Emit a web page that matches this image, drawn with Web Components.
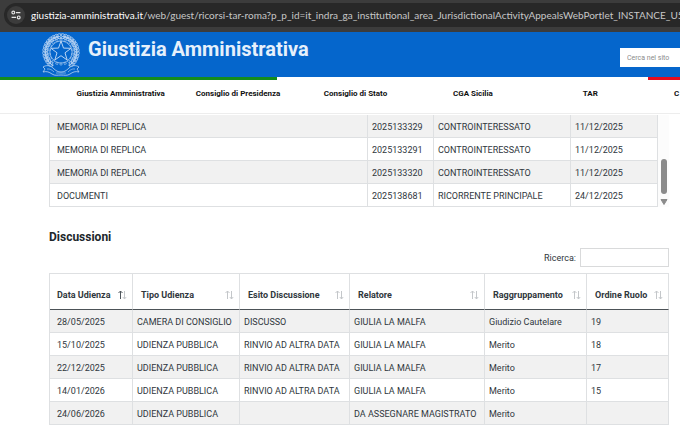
<!DOCTYPE html>
<html lang="it">
<head>
<meta charset="UTF-8">
<meta name="viewport" content="width=device-width, initial-scale=1.0">
<title>Giustizia Amministrativa</title>
<style>
    body {
        margin: 0;
        background: #ffffff;
        color: #30373d;
        font-family: Roboto, "Liberation Sans", sans-serif;
        font-size: 9px;
        overflow-x: hidden;
    }

    main {
        padding: 0 11px 14px 49px;
    }

    h2 {
        margin: 21px 0 0;
        font-size: 12px;
        line-height: 18px;
        font-weight: 700;
        color: #20262b;
    }
</style>
</head>
<body>
    <address-bar host="giustizia-amministrativa.it">/web/guest/ricorsi-tar-roma?p_p_id=it_indra_ga_institutional_area_JurisdictionalActivityAppealsWebPortlet_INSTANCE_U5</address-bar>
    <site-header>Giustizia Amministrativa</site-header>
    <site-nav></site-nav>
    <main>
        <scroll-panel>
            <data-grid id="atti"></data-grid>
        </scroll-panel>
        <h2>Discussioni</h2>
        <table-search>Ricerca:</table-search>
        <data-grid id="discussioni"></data-grid>
    </main>

<script>
    class AddressBar extends HTMLElement {
        constructor() {
            super();
            this.attachShadow({ mode: 'open' });
        }

        connectedCallback() {
            this.shadowRoot.innerHTML = `
                <style>
                    :host {
                        display: block;
                        background: #3c3c3c;
                        padding: 3px 0 5px 4px;
                        overflow: hidden;
                    }
                    .field {
                        display: flex;
                        align-items: center;
                        gap: 6px;
                        height: 24px;
                        padding-left: 3px;
                        border-radius: 12px 0 0 12px;
                        background: #282828;
                        color: #c7c7c7;
                        font-family: Lato, sans-serif;
                        font-size: 10px;
                        white-space: nowrap;
                    }
                    button {
                        flex: none;
                        display: grid;
                        place-items: center;
                        width: 18px;
                        height: 18px;
                        padding: 0;
                        border: 0;
                        border-radius: 50%;
                        background: #3c3c3c;
                    }
                    b {
                        font-weight: 400;
                        color: #ffffff;
                    }
                </style>
                <div class="field">
                    <button aria-label="Informazioni sul sito">
                        <svg width="10" height="10" viewBox="0 0 10 10" fill="none" stroke="#e3e3e3" stroke-width="1.2">
                            <circle cx="2.3" cy="2.6" r="1.4"/>
                            <path d="M5 2.6h4.4M.6 7.4H5"/>
                            <circle cx="7.7" cy="7.4" r="1.4"/>
                        </svg>
                    </button>
                    <span><b>${this.getAttribute('host')}</b><slot></slot></span>
                </div>
            `;
        }
    }

    // Emblema della Repubblica: stella, ruota dentata, rami e nastro
    class RepublicEmblem extends HTMLElement {
        constructor() {
            super();
            this.attachShadow({ mode: 'open' });
        }

        connectedCallback() {
            this.shadowRoot.innerHTML = `
                <style>
                    :host { display: block; }
                    svg { display: block; }
                </style>
                <svg width="40" height="44" viewBox="0 0 40 44" fill="none" stroke="#b9d4f3" stroke-width=".8">
                    ${this.teeth()}
                    <circle cx="20" cy="20" r="11" stroke-width=".6"/>
                    <path d="${this.star(20, 19.5, 10.5, 4.2)}" fill="#0566cc" stroke-width="1"/>
                    ${this.leaves()}
                    <path d="M2 35c3-2 7-2 10 1s5 4 8 4 5-1 8-4 7-3 10-1l-2 2 2 3c-4-1-6 0-9 2s-5 1-9 1-6 1-9-1-5-3-9-2l2-3z"/>
                    <path d="M6 37c3-.5 5 1 7 3M34 37c-3-.5-5 1-7 3M15 41h10" stroke-width=".6"/>
                </svg>
            `;
        }

        star(cx, cy, outer, inner) {
            const points = [];
            for (let i = 0; i < 10; i++) {
                const r = i % 2 ? inner : outer;
                const a = -Math.PI / 2 + i * Math.PI / 5;
                points.push((cx + r * Math.cos(a)).toFixed(1) + ' ' + (cy + r * Math.sin(a)).toFixed(1));
            }
            return 'M' + points.join('L') + 'z';
        }

        teeth() {
            let out = '';
            for (let i = 0; i < 18; i++) {
                out += `<path d="M19 7h2v2h-2z" stroke-width=".5" transform="rotate(${i * 20} 20 20)"/>`;
            }
            return out;
        }

        leaves() {
            let out = '';
            for (let a = 18; a <= 150; a += 11) {
                for (const side of [1, -1]) {
                    out += `<g transform="rotate(${a * side} 20 20)" stroke-width=".7">
                        <path d="M20 4q${-4 * side} -4 ${-6 * side} 0q${3 * side} 2 ${6 * side} 0z"/>
                        <path d="M20 4q${-2 * side} 4 ${-5 * side} 3q${1 * side} -3 ${5 * side} -3z"/>
                    </g>`;
                }
            }
            return out;
        }
    }

    class SiteHeader extends HTMLElement {
        constructor() {
            super();
            this.attachShadow({ mode: 'open' });
        }

        connectedCallback() {
            this.shadowRoot.innerHTML = `
                <style>
                    :host {
                        display: flex;
                        align-items: flex-start;
                        gap: 7px;
                        height: 45px;
                        padding-left: 41px;
                        background: #0566cc;
                    }
                    h1 {
                        flex: 1;
                        margin: 4px 0 0;
                        font-size: 20px;
                        line-height: 26px;
                        font-weight: 700;
                        color: #e6f0fb;
                        white-space: nowrap;
                    }
                    input {
                        box-sizing: border-box;
                        width: 60px;
                        height: 19px;
                        margin-top: 16px;
                        padding: 0 0 0 7px;
                        border: 0;
                        background: #ffffff;
                        font-family: inherit;
                        font-size: 7px;
                    }
                    input::placeholder { color: #8b8b8b; }
                </style>
                <republic-emblem></republic-emblem>
                <h1><slot></slot></h1>
                <input type="text" placeholder="Cerca nel sito" aria-label="Cerca nel sito">
            `;
        }
    }

    class SiteNav extends HTMLElement {
        constructor() {
            super();
            this.attachShadow({ mode: 'open' });
        }

        connectedCallback() {
            const items = ['Giustizia Amministrativa', 'Consiglio di Presidenza', 'Consiglio di Stato', 'CGA Sicilia', 'TAR', 'C'];
            this.shadowRoot.innerHTML = `
                <style>
                    :host {
                        display: block;
                        overflow: hidden;
                        border-bottom: 1px solid #ededed;
                    }
                    .flag {
                        display: grid;
                        grid-template-columns: 277fr 371fr 32fr;
                        height: 3px;
                    }
                    .green { background: #148c1c; }
                    .red { grid-column: 3; background: #e60d1f; }
                    nav {
                        display: grid;
                        grid-auto-flow: column;
                        grid-auto-columns: 19%;
                        margin-left: 62px;
                    }
                    a {
                        font-size: 8px;
                        line-height: 28px;
                        padding-bottom: 5px;
                        font-weight: 700;
                        text-align: center;
                        text-decoration: none;
                        white-space: nowrap;
                        color: #111111;
                    }
                    a:last-child {
                        text-align: left;
                        padding-left: 25px;
                    }
                </style>
                <div class="flag"><div class="green"></div><div class="red"></div></div>
                <nav>${items.map(item => `<a href="#">${item}</a>`).join('')}</nav>
            `;
        }
    }

    class ScrollPanel extends HTMLElement {
        constructor() {
            super();
            this.attachShadow({ mode: 'open' });
        }

        connectedCallback() {
            this.shadowRoot.innerHTML = `
                <style>
                    :host {
                        display: grid;
                        grid-template-columns: 1fr 11px;
                        padding-top: 1px;
                    }
                    .bar {
                        display: flex;
                        flex-direction: column;
                        align-items: center;
                        justify-content: flex-end;
                        gap: 5px;
                        padding-bottom: 2px;
                        background: #fcfcfc;
                    }
                    .thumb {
                        width: 6px;
                        height: 35px;
                        border-radius: 3px;
                        background: #8b8b8b;
                    }
                </style>
                <slot></slot>
                <div class="bar">
                    <div class="thumb"></div>
                    <svg width="8" height="6" viewBox="0 0 8 6"><path d="M1 .5h6L4 5.5z" fill="#8b8b8b" stroke="#8b8b8b" stroke-linejoin="round"/></svg>
                </div>
            `;
        }
    }

    class TableSearch extends HTMLElement {
        constructor() {
            super();
            this.attachShadow({ mode: 'open' });
        }

        connectedCallback() {
            this.shadowRoot.innerHTML = `
                <style>
                    :host {
                        display: flex;
                        justify-content: flex-end;
                        align-items: center;
                        gap: 4px;
                        padding: 2px 0 6px;
                    }
                    input {
                        box-sizing: border-box;
                        width: 89px;
                        height: 19px;
                        border: 1px solid #d9dadb;
                        background: #ffffff;
                    }
                </style>
                <label for="q"><slot></slot></label>
                <input id="q" type="search">
            `;
        }
    }

    class DataGrid extends HTMLElement {
        constructor() {
            super();
            this.attachShadow({ mode: 'open' });
        }

        /** Imposta larghezze, intestazioni e righe, poi ridisegna la tabella */
        setData({ widths, headers = [], rows }) {
            this.shadowRoot.innerHTML = `
                <style>
                    :host { display: block; }
                    table {
                        width: 100%;
                        table-layout: fixed;
                        border-collapse: separate;
                        border-spacing: 0;
                        border-left: 1px solid #dee0e2;
                        line-height: 16px;
                    }
                    th, td {
                        box-sizing: border-box;
                        border-right: 1px solid #dee0e2;
                        border-bottom: 1px solid #dee0e2;
                        text-align: left;
                        white-space: nowrap;
                    }
                    td {
                        height: 23px;
                        padding: 1px 4px 0;
                    }
                    td:first-child, th:first-child { padding-left: 7px; }
                    tbody tr:nth-child(odd) { background: #f1f1f1; }
                    th {
                        height: 37px;
                        padding: 6px 5px 0 8px;
                        border-top: 1px solid #dee0e2;
                        border-bottom: 1px solid #4c5257;
                    }
                    button {
                        display: flex;
                        justify-content: space-between;
                        align-items: center;
                        width: 100%;
                        padding: 0;
                        border: 0;
                        background: none;
                        color: inherit;
                        font: inherit;
                        font-weight: 700;
                    }
                    svg { flex: none; }
                </style>
                <table>
                    <colgroup>${widths.map(w => w ? `<col style="width: ${w}px">` : '<col>').join('')}</colgroup>
                    ${headers.length ? `<thead><tr>${headers.map((h, i) => `<th><button>${h}${this.arrows(i === 0)}</button></th>`).join('')}</tr></thead>` : ''}
                    <tbody>${rows.map(row => `<tr>${row.map(cell => `<td>${cell}</td>`).join('')}</tr>`).join('')}</tbody>
                </table>
            `;
        }

        arrows(ascending) {
            return `<svg width="9" height="10" viewBox="0 0 9 10" fill="none" stroke="#c4c7ca">
                <path d="M2.5 9V1M.5 3l2-2 2 2" stroke="${ascending ? '#50575d' : '#c4c7ca'}"/>
                <path d="M6.5 1v8M4.8 7l1.7 2 1.7-2"/>
            </svg>`;
        }
    }

    customElements.define('address-bar', AddressBar);
    customElements.define('republic-emblem', RepublicEmblem);
    customElements.define('site-header', SiteHeader);
    customElements.define('site-nav', SiteNav);
    customElements.define('scroll-panel', ScrollPanel);
    customElements.define('table-search', TableSearch);
    customElements.define('data-grid', DataGrid);

    document.getElementById('atti').setData({
        widths: [0, 66, 137, 87],
        rows: [
            ['MEMORIA DI REPLICA', '2025133329', 'CONTROINTERESSATO', '11/12/2025'],
            ['MEMORIA DI REPLICA', '2025133291', 'CONTROINTERESSATO', '11/12/2025'],
            ['MEMORIA DI REPLICA', '2025133320', 'CONTROINTERESSATO', '11/12/2025'],
            ['DOCUMENTI', '2025138681', 'RICORRENTE PRINCIPALE', '24/12/2025']
        ]
    });

    document.getElementById('discussioni').setData({
        widths: [83, 107, 110, 0, 102, 82],
        headers: ['Data Udienza', 'Tipo Udienza', 'Esito Discussione', 'Relatore', 'Raggruppamento', 'Ordine Ruolo'],
        rows: [
            ['28/05/2025', 'CAMERA DI CONSIGLIO', 'DISCUSSO', 'GIULIA LA MALFA', 'Giudizio Cautelare', '19'],
            ['15/10/2025', 'UDIENZA PUBBLICA', 'RINVIO AD ALTRA DATA', 'GIULIA LA MALFA', 'Merito', '18'],
            ['22/12/2025', 'UDIENZA PUBBLICA', 'RINVIO AD ALTRA DATA', 'GIULIA LA MALFA', 'Merito', '17'],
            ['14/01/2026', 'UDIENZA PUBBLICA', 'RINVIO AD ALTRA DATA', 'GIULIA LA MALFA', 'Merito', '15'],
            ['24/06/2026', 'UDIENZA PUBBLICA', '', 'DA ASSEGNARE MAGISTRATO', 'Merito', '']
        ]
    });
</script>
</body>
</html>
